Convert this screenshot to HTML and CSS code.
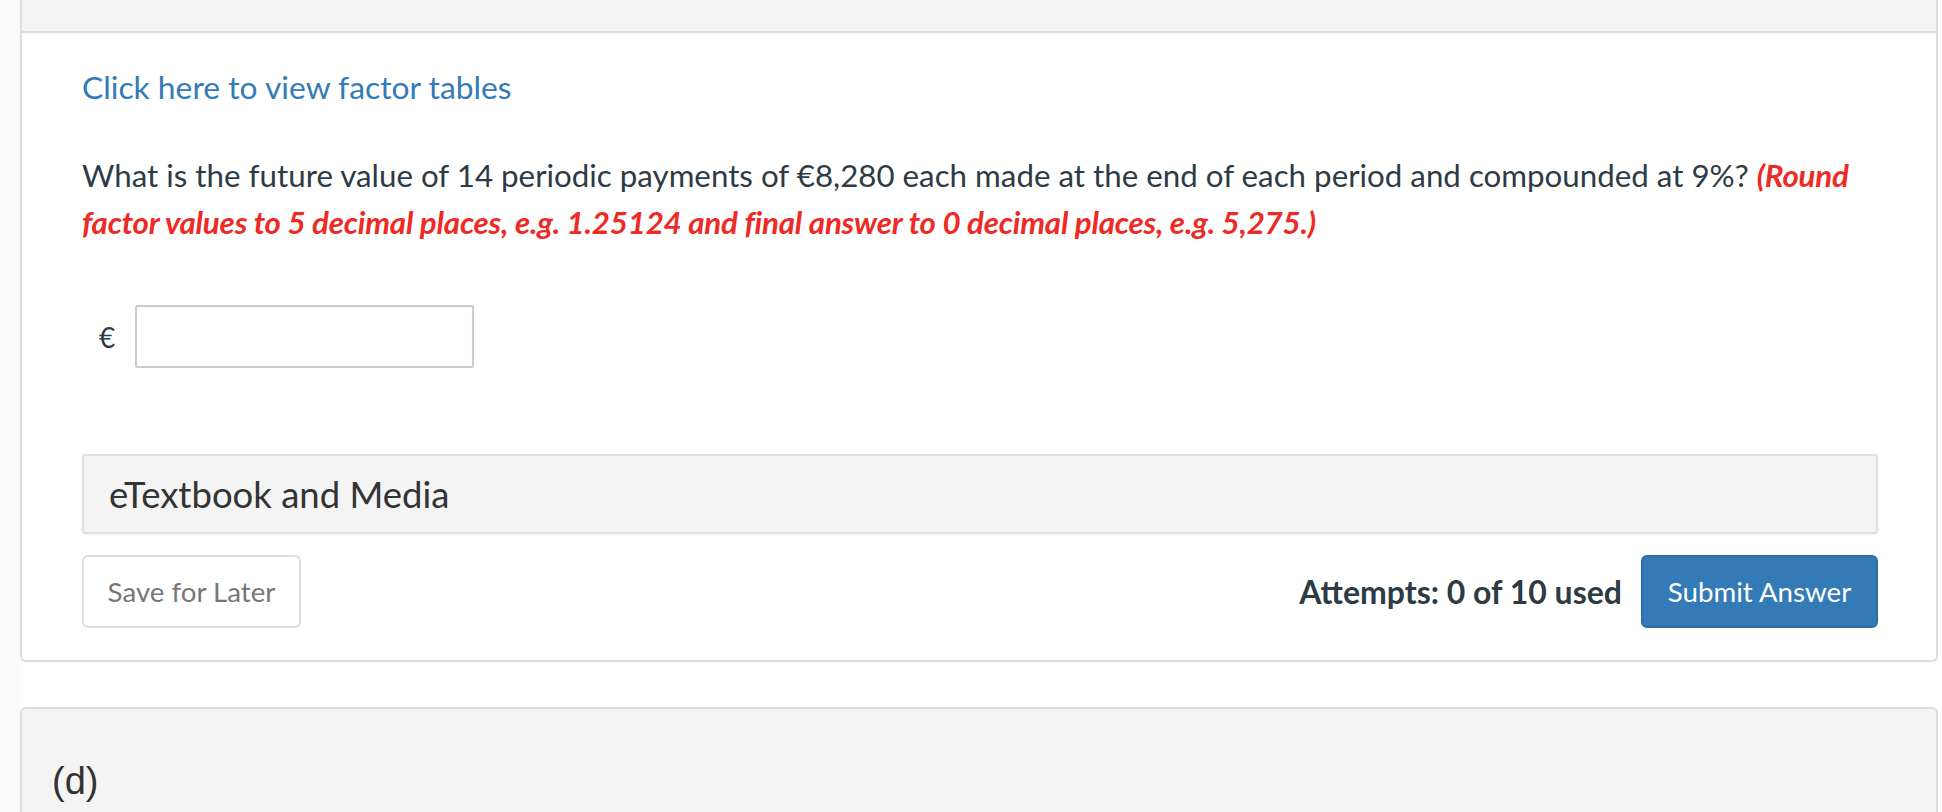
FILE: index.html
```html
<!DOCTYPE html>
<html lang="en">
<head>
<meta charset="utf-8">
<title>Question</title>
<link rel="stylesheet" href="styles.css">
</head>
<body>
<div class="page">
  <div class="rail"></div>
  <div class="main">
    <section class="card">
      <div class="card-head"></div>
      <div class="card-body">
        <p class="link-row"><a class="link" href="#">Click here to view factor tables</a></p>
        <p class="question">What is the future value of 14 periodic payments of €8,280 each made at the end of each period and compounded at 9%? <em class="hint">(Round factor values to 5 decimal places, e.g. 1.25124 and final answer to 0 decimal places, e.g. 5,275.)</em></p>
        <div class="answer">
          <span class="currency">€</span>
          <input class="answer-input" type="text" aria-label="answer">
        </div>
        <div class="media-panel">eTextbook and Media</div>
        <div class="actions">
          <button class="btn btn-default" type="button">Save for Later</button>
          <div class="actions-right">
            <span class="attempts">Attempts: 0 of 10 used</span>
            <button class="btn btn-primary" type="button">Submit Answer</button>
          </div>
        </div>
      </div>
    </section>
    <section class="card next">
      <div class="next-head">(d)</div>
    </section>
  </div>
</div>
</body>
</html>
```
FILE: styles.css
```css
html, body {
  margin: 0;
  padding: 0;
  background: #ffffff;
  height: 100%;
  overflow: hidden;
}
body {
  font-family: Lato, "Open Sans", sans-serif;
  color: #2d3b45;
}
.page {
  display: flex;
  min-height: 812px;
}
.rail {
  width: 20px;
  flex: none;
  background: #fafafa;
}
.main {
  flex: 1;
  margin-right: 4px;
  display: flex;
  flex-direction: column;
}
.card {
  background: #fff;
  border: 2px solid #dddddd;
  border-top: none;
  border-radius: 0 0 6px 6px;
  box-shadow: 0 1px 2px rgba(0,0,0,0.04);
}
.card-head {
  height: 31px;
  background: #f4f4f4;
  border-bottom: 2px solid #dddddd;
}
.card-body {
  padding: 31px 58px 32px 60px;
}
.link-row {
  margin: 0;
  font-size: 31.8px;
  line-height: 47px;
}
.link {
  color: #337ab7;
  text-decoration: none;
}
.question {
  margin: 41px 0 0;
  font-size: 31.3px;
  line-height: 47px;
}
.hint {
  color: #ee2a24;
  font-weight: 700;
  font-style: italic;
  letter-spacing: -0.2px;
}
.answer {
  display: flex;
  align-items: center;
  gap: 20px;
  margin: 59px 0 0 17px;
}
.currency {
  font-size: 28px;
  color: #2d3b45;
}
.answer-input {
  width: 339px;
  height: 63px;
  box-sizing: border-box;
  border: 2px solid #cccccc;
  border-radius: 2px;
  box-shadow: inset 0 1px 2px rgba(0,0,0,0.06);
  margin: 0;
  padding: 0 10px;
  font: inherit;
}
.media-panel {
  margin-top: 86px;
  height: 80px;
  box-sizing: border-box;
  display: flex;
  align-items: center;
  padding: 0 25px;
  background: #f4f4f4;
  border: 2px solid #e0e0e0;
  border-radius: 4px;
  box-shadow: 0 1px 2px rgba(0,0,0,0.05);
  font-size: 36.5px;
  color: #333333;
}
.actions {
  margin-top: 21px;
  display: flex;
  justify-content: space-between;
  align-items: center;
}
.actions-right {
  display: flex;
  align-items: center;
  gap: 19px;
}
.btn {
  height: 73px;
  box-sizing: border-box;
  border-radius: 6px;
  font-family: Lato, "Open Sans", sans-serif;
  font-size: 27.7px;
  padding: 0;
  margin: 0;
  cursor: pointer;
}
.btn-default {
  width: 219px;
  background: #fff;
  color: #777777;
  border: 2px solid #dddddd;
}
.btn-primary {
  width: 237px;
  background: #337ab7;
  color: #ffffff;
  border: 2px solid #2e6da4;
}
.attempts {
  font-size: 32px;
  font-weight: 700;
  color: #2d3b45;
}
.next {
  margin-top: 45px;
  border-top: 2px solid #dddddd;
  border-bottom: none;
  border-radius: 6px 6px 0 0;
  background: #f4f4f4;
  flex: 1;
}
.next-head {
  padding: 50px 30px 0;
  font-family: "Liberation Sans", Arial, sans-serif;
  font-size: 38px;
  line-height: 44px;
  color: #333333;
}
```
